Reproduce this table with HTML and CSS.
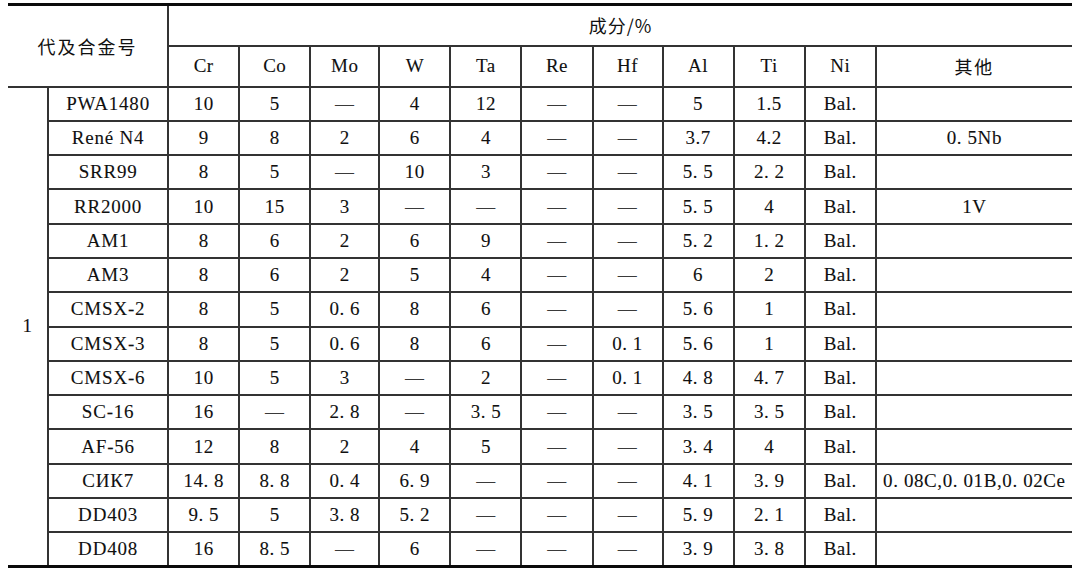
FILE: index.html
```html
<!DOCTYPE html>
<html lang="zh">
<head>
<meta charset="utf-8">
<title>单晶高温合金成分</title>
<link rel="stylesheet" href="styles.css">
</head>
<body>
<table class="alloys">
  <colgroup>
    <col class="c-gen"><col class="c-name">
    <col class="c-el"><col class="c-el"><col class="c-mo"><col class="c-el"><col class="c-el">
    <col class="c-el"><col class="c-hf"><col class="c-el"><col class="c-el"><col class="c-el">
    <col class="c-other">
  </colgroup>
  <thead>
    <tr class="h1">
      <th class="cjk head-name" colspan="2" rowspan="2">代及合金号</th>
      <th class="cjk head-comp" colspan="11">成分/%</th>
    </tr>
    <tr class="h2">
      <th>Cr</th><th>Co</th><th>Mo</th><th>W</th><th>Ta</th><th>Re</th><th>Hf</th><th>Al</th><th>Ti</th><th>Ni</th><th class="cjk other-h">其他</th>
    </tr>
  </thead>
  <tbody>
    <tr><td class="gen" rowspan="14">1</td><td class="name">PWA1480</td><td>10</td><td>5</td><td class="d">—</td><td>4</td><td>12</td><td class="d">—</td><td class="d">—</td><td>5</td><td>1.5</td><td>Bal.</td><td class="other"></td></tr>
    <tr><td class="name">René N4</td><td>9</td><td>8</td><td>2</td><td>6</td><td>4</td><td class="d">—</td><td class="d">—</td><td>3.7</td><td>4.2</td><td>Bal.</td><td class="other">0. 5Nb</td></tr>
    <tr><td class="name">SRR99</td><td>8</td><td>5</td><td class="d">—</td><td>10</td><td>3</td><td class="d">—</td><td class="d">—</td><td>5. 5</td><td>2. 2</td><td>Bal.</td><td class="other"></td></tr>
    <tr><td class="name">RR2000</td><td>10</td><td>15</td><td>3</td><td class="d">—</td><td class="d">—</td><td class="d">—</td><td class="d">—</td><td>5. 5</td><td>4</td><td>Bal.</td><td class="other">1V</td></tr>
    <tr><td class="name">AM1</td><td>8</td><td>6</td><td>2</td><td>6</td><td>9</td><td class="d">—</td><td class="d">—</td><td>5. 2</td><td>1. 2</td><td>Bal.</td><td class="other"></td></tr>
    <tr><td class="name">AM3</td><td>8</td><td>6</td><td>2</td><td>5</td><td>4</td><td class="d">—</td><td class="d">—</td><td>6</td><td>2</td><td>Bal.</td><td class="other"></td></tr>
    <tr><td class="name">CMSX-2</td><td>8</td><td>5</td><td>0. 6</td><td>8</td><td>6</td><td class="d">—</td><td class="d">—</td><td>5. 6</td><td>1</td><td>Bal.</td><td class="other"></td></tr>
    <tr><td class="name">CMSX-3</td><td>8</td><td>5</td><td>0. 6</td><td>8</td><td>6</td><td class="d">—</td><td>0. 1</td><td>5. 6</td><td>1</td><td>Bal.</td><td class="other"></td></tr>
    <tr><td class="name">CMSX-6</td><td>10</td><td>5</td><td>3</td><td class="d">—</td><td>2</td><td class="d">—</td><td>0. 1</td><td>4. 8</td><td>4. 7</td><td>Bal.</td><td class="other"></td></tr>
    <tr><td class="name">SC-16</td><td>16</td><td class="d">—</td><td>2. 8</td><td class="d">—</td><td>3. 5</td><td class="d">—</td><td class="d">—</td><td>3. 5</td><td>3. 5</td><td>Bal.</td><td class="other"></td></tr>
    <tr><td class="name">AF-56</td><td>12</td><td>8</td><td>2</td><td>4</td><td>5</td><td class="d">—</td><td class="d">—</td><td>3. 4</td><td>4</td><td>Bal.</td><td class="other"></td></tr>
    <tr><td class="name">СИК7</td><td>14. 8</td><td>8. 8</td><td>0. 4</td><td>6. 9</td><td class="d">—</td><td class="d">—</td><td class="d">—</td><td>4. 1</td><td>3. 9</td><td>Bal.</td><td class="other">0. 08C,0. 01B,0. 02Ce</td></tr>
    <tr><td class="name">DD403</td><td>9. 5</td><td>5</td><td>3. 8</td><td>5. 2</td><td class="d">—</td><td class="d">—</td><td class="d">—</td><td>5. 9</td><td>2. 1</td><td>Bal.</td><td class="other"></td></tr>
    <tr><td class="name">DD408</td><td>16</td><td>8. 5</td><td class="d">—</td><td>6</td><td class="d">—</td><td class="d">—</td><td class="d">—</td><td>3. 9</td><td>3. 8</td><td>Bal.</td><td class="other"></td></tr>
  </tbody>
</table>
</body>
</html>
```

FILE: styles.css
```css
html, body {
  background: #ffffff;
}

body {
  margin: 3px 8px 0;
  color: #101010;
  font-family: "Liberation Serif", "Times New Roman", serif;
}

.alloys {
  width: 1064px;
  table-layout: fixed;
  border-collapse: collapse;
  border-top: 3px solid #0a0a0a;
  border-bottom: 3px solid #0a0a0a;
  font-size: 19px;
  letter-spacing: 0.5px;
  -webkit-text-stroke: 0.1px #101010;
}

.c-gen { width: 40px; }
.c-name { width: 120px; }
.c-el { width: 71px; }
.c-mo { width: 69px; }
.c-hf { width: 70px; }
.c-other { width: 196px; }

.alloys th,
.alloys td {
  padding: 0;
  text-align: center;
  vertical-align: middle;
  white-space: nowrap;
  font-weight: normal;
  border: 2px solid #333;
}

.alloys tr > :first-child {
  border-left: none;
}

.alloys tr > :last-child {
  border-right: none;
}

.h1 { height: 41px; }
.h2 { height: 41px; }
.alloys tbody tr { height: 34.3px; }

.cjk {
  font-family: "Noto Sans CJK SC", "Noto Sans", sans-serif;
  font-weight: 700;
  font-size: 18px;
  letter-spacing: 2px;
  -webkit-text-stroke: 0;
}

.head-comp {
  letter-spacing: 1px;
  padding-top: 2px;
}

.other-h {
  letter-spacing: 2px;
}

.gen {
  border-left: none;
}

.name {
  letter-spacing: 0.8px;
}

.d {
  color: #3a3a3a;
  -webkit-text-stroke: 0;
}

.other {
  letter-spacing: 0.6px;
}
```
